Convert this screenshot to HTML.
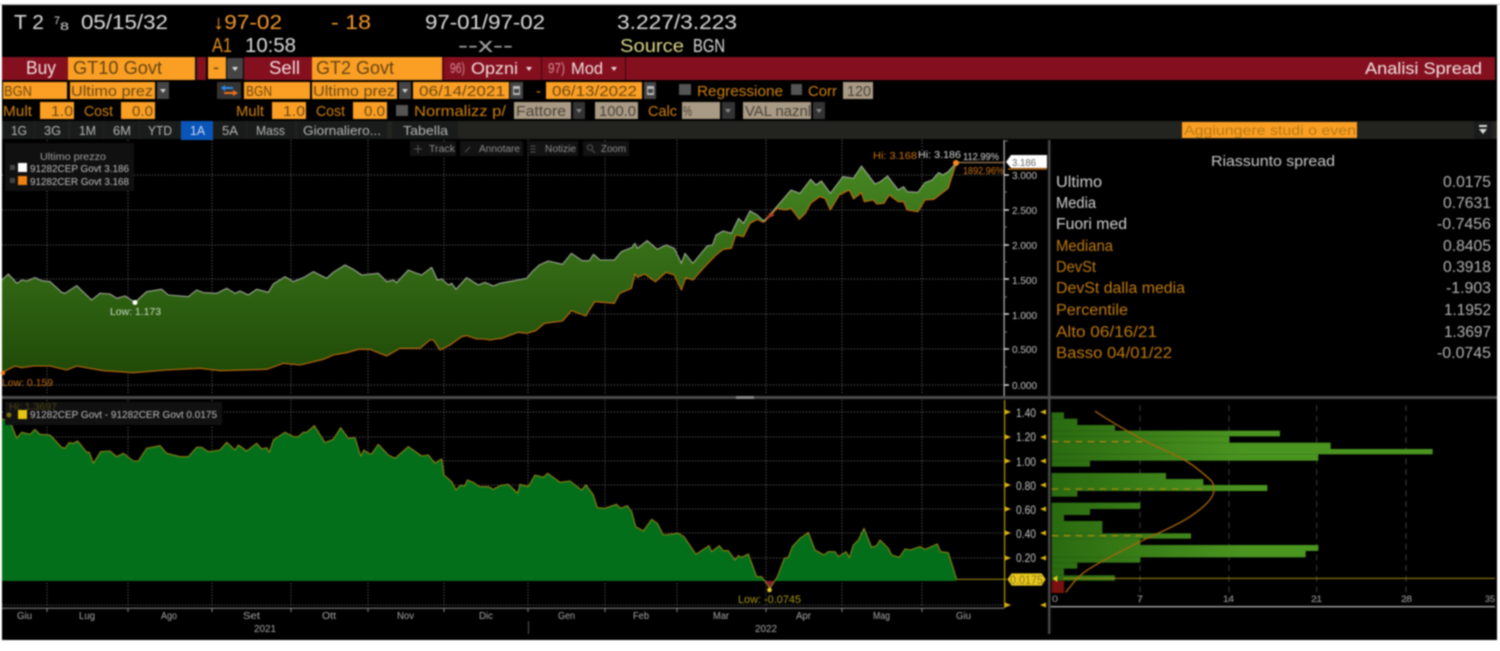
<!DOCTYPE html>
<html><head><meta charset="utf-8"><title>Analisi Spread</title>
<style>
html,body{margin:0;padding:0;background:#fff;width:1500px;height:651px;overflow:hidden}
svg{display:block;filter:blur(.7px)}
text{font-family:"Liberation Sans",sans-serif;white-space:pre}
.s{vector-effect:non-scaling-stroke;stroke-linejoin:round}
</style></head><body>
<svg xmlns="http://www.w3.org/2000/svg" width="1500" height="651" viewBox="0 0 1500 651">
<defs>
<linearGradient id="gl" gradientUnits="userSpaceOnUse" x1="0" y1="-195" x2="0" y2="450"><stop offset="0" stop-color="#468622"/><stop offset="1" stop-color="#1e4806"/></linearGradient>
<linearGradient id="gr" gradientUnits="userSpaceOnUse" x1="0" y1="15" x2="0" y2="660"><stop offset="0" stop-color="#468622"/><stop offset="1" stop-color="#1e4806"/></linearGradient>
<linearGradient id="gb" gradientUnits="userSpaceOnUse" x1="155" y1="0" x2="1300" y2="0"><stop offset="0" stop-color="#2a6a10"/><stop offset=".5" stop-color="#4a9420"/><stop offset="1" stop-color="#4a9420"/></linearGradient>
</defs>
<rect x="0" y="4" width="1500" height="1" fill="#bbb"/>
<rect x="2" y="5" width="1495" height="635" fill="#000"/>

<!-- header -->
<g font-size="20" fill="#dcdcdc">
<text x="14" y="29" textLength="30" lengthAdjust="spacingAndGlyphs">T 2</text>
<text x="54" y="24" font-size="11" textLength="6" lengthAdjust="spacingAndGlyphs">7</text>
<text x="60" y="30" font-size="11" textLength="9" lengthAdjust="spacingAndGlyphs">8</text>
<text x="81" y="29" textLength="87" lengthAdjust="spacingAndGlyphs">05/15/32</text>
<text x="425" y="29" textLength="120" lengthAdjust="spacingAndGlyphs">97-01/97-02</text>
<text x="617" y="29" textLength="120" lengthAdjust="spacingAndGlyphs">3.227/3.223</text>
<text x="245" y="52" textLength="51" lengthAdjust="spacingAndGlyphs">10:58</text>
<text x="458" y="52" textLength="55" fill="#a8a8a8" lengthAdjust="spacingAndGlyphs">--x--</text>
<text x="693" y="52" textLength="32" font-size="18" lengthAdjust="spacingAndGlyphs">BGN</text>
</g>
<g font-size="20" fill="#f2982a">
<text x="213" y="29" textLength="69" lengthAdjust="spacingAndGlyphs">↓97-02</text>
<text x="331" y="29" textLength="40" lengthAdjust="spacingAndGlyphs">- 18</text>
<text x="212" y="52" textLength="20" fill="#dd8c1e" lengthAdjust="spacingAndGlyphs">A1</text>
</g>
<text x="620" y="52" font-size="18" fill="#d9d488" textLength="64" lengthAdjust="spacingAndGlyphs">Source</text>

<!-- red bar -->
<rect x="2" y="57" width="1493" height="23" fill="#84101f"/>
<rect x="195" y="57" width="2" height="23" fill="#111"/>
<rect x="206" y="57" width="38" height="23" fill="#000"/>
<rect x="208" y="57" width="18" height="22" fill="#fb9f24"/>
<rect x="227" y="58" width="16" height="21" fill="#444"/>
<polygon points="232,67 238,67 235,71" fill="#ddd"/>
<rect x="68" y="57" width="127" height="23" fill="#fb9f24"/>
<rect x="312" y="57" width="130" height="23" fill="#fb9f24"/>
<rect x="443" y="57" width="1" height="23" fill="#3c060c"/>
<rect x="541" y="57" width="1" height="23" fill="#3c060c"/>
<rect x="625" y="57" width="1" height="23" fill="#3c060c"/>
<g font-size="18">
<text x="26" y="74" fill="#f2dcdc" textLength="30" lengthAdjust="spacingAndGlyphs">Buy</text>
<text x="73" y="74" fill="#644310" textLength="89" lengthAdjust="spacingAndGlyphs">GT10 Govt</text>
<text x="213" y="73" fill="#644310">-</text>
<text x="269" y="74" fill="#f2dcdc" textLength="31" lengthAdjust="spacingAndGlyphs">Sell</text>
<text x="316" y="74" fill="#644310" textLength="78" lengthAdjust="spacingAndGlyphs">GT2 Govt</text>
<text x="471" y="74" fill="#f2dcdc" font-size="17" textLength="47" lengthAdjust="spacingAndGlyphs">Opzni</text>
<text x="571" y="74" fill="#f2dcdc" font-size="17" textLength="32" lengthAdjust="spacingAndGlyphs">Mod</text>
<text x="1365" y="74" fill="#f2e4e4" font-size="17" textLength="117" lengthAdjust="spacingAndGlyphs">Analisi Spread</text>
</g>
<g font-size="15" fill="#d58c96">
<text x="450" y="73" textLength="15" lengthAdjust="spacingAndGlyphs">96)</text>
<text x="548" y="73" textLength="17" lengthAdjust="spacingAndGlyphs">97)</text>
</g>
<polygon points="526,67 532,67 529,71" fill="#e8d8d8"/>
<polygon points="611,67 617,67 614,71" fill="#e8d8d8"/>

<!-- row 2 -->
<g fill="#fb9f24">
<rect x="3" y="82" width="64" height="17"/>
<rect x="70" y="82" width="85" height="17"/>
<rect x="244" y="82" width="66" height="17"/>
<rect x="312" y="82" width="85" height="17"/>
<rect x="413" y="82" width="96" height="17"/>
<rect x="546" y="82" width="96" height="17"/>
<rect x="40" y="102" width="34" height="17"/>
<rect x="121" y="102" width="34" height="17"/>
<rect x="272" y="102" width="34" height="17"/>
<rect x="353" y="102" width="34" height="17"/>
</g>
<g fill="#444">
<rect x="157" y="82" width="12" height="17"/>
<rect x="399" y="82" width="12" height="17"/>
<rect x="510" y="82" width="13" height="17"/>
<rect x="644" y="82" width="12" height="17"/>
<rect x="217" y="82" width="24" height="17" fill="#333"/>
<rect x="573" y="102" width="12" height="17" fill="#333"/>
<rect x="722" y="102" width="13" height="17" fill="#333"/>
<rect x="813" y="102" width="12" height="17" fill="#333"/>
</g>
<g fill="#ccc">
<polygon points="160,89 166,89 163,93"/>
<polygon points="402,89 408,89 405,93"/>
<polygon points="576,109 582,109 579,113" fill="#888"/>
<polygon points="725,109 731,109 728,113" fill="#888"/>
<polygon points="816,109 822,109 819,113" fill="#888"/>
<rect x="513" y="86" width="7" height="9" fill="#bbb"/>
<rect x="647" y="86" width="7" height="9" fill="#bbb"/>
<rect x="514" y="89" width="5" height="4" fill="#444"/>
<rect x="648" y="89" width="5" height="4" fill="#444"/>
</g>
<path d="M222 88h11" stroke="#2a8cf0" stroke-width="2" fill="none"/>
<polygon points="225,85 225,91 221,88" fill="#2a8cf0"/>
<path d="M224 93h10" stroke="#f0701e" stroke-width="2" fill="none"/>
<polygon points="233,90 233,96 238,93" fill="#f0701e"/>
<g fill="#545454">
<rect x="679" y="84" width="12" height="11"/>
<rect x="791" y="84" width="11" height="11"/>
<rect x="396" y="105" width="12" height="11"/>
</g>
<g fill="#a89a85">
<rect x="843" y="82" width="30" height="17"/>
<rect x="514" y="102" width="57" height="17"/>
<rect x="595" y="102" width="43" height="17"/>
<rect x="682" y="102" width="38" height="17"/>
<rect x="743" y="102" width="68" height="17"/>
</g>
<g font-size="15" fill="#6e4a12">
<text x="4" y="96" textLength="28" lengthAdjust="spacingAndGlyphs">BGN</text>
<text x="71" y="96" textLength="82" lengthAdjust="spacingAndGlyphs">Ultimo prez</text>
<text x="246" y="96" textLength="26" lengthAdjust="spacingAndGlyphs">BGN</text>
<text x="313" y="96" textLength="82" lengthAdjust="spacingAndGlyphs">Ultimo prez</text>
<text x="419" y="96" textLength="86" lengthAdjust="spacingAndGlyphs">06/14/2021</text>
<text x="552" y="96" textLength="85" lengthAdjust="spacingAndGlyphs">06/13/2022</text>
<text x="51" y="116" textLength="22" lengthAdjust="spacingAndGlyphs">1.0</text>
<text x="132" y="116" textLength="21" lengthAdjust="spacingAndGlyphs">0.0</text>
<text x="283" y="116" textLength="22" lengthAdjust="spacingAndGlyphs">1.0</text>
<text x="364" y="116" textLength="21" lengthAdjust="spacingAndGlyphs">0.0</text>
</g>
<g font-size="15" fill="#4c4438">
<text x="847" y="96" textLength="24" lengthAdjust="spacingAndGlyphs">120</text>
<text x="516" y="116" textLength="50" lengthAdjust="spacingAndGlyphs">Fattore</text>
<text x="599" y="116" textLength="37" lengthAdjust="spacingAndGlyphs">100.0</text>
<text x="683" y="116" textLength="9" lengthAdjust="spacingAndGlyphs">%</text>
<text x="745" y="116" textLength="66" lengthAdjust="spacingAndGlyphs">VAL naznl</text>
</g>
<g font-size="15" fill="#d0810f">
<text x="697" y="96" textLength="86" lengthAdjust="spacingAndGlyphs">Regressione</text>
<text x="808" y="96" textLength="29" lengthAdjust="spacingAndGlyphs">Corr</text>
<text x="3" y="116" textLength="29" lengthAdjust="spacingAndGlyphs">Mult</text>
<text x="84" y="116" textLength="29" lengthAdjust="spacingAndGlyphs">Cost</text>
<text x="236" y="116" textLength="28" lengthAdjust="spacingAndGlyphs">Mult</text>
<text x="316" y="116" textLength="29" lengthAdjust="spacingAndGlyphs">Cost</text>
<text x="414" y="116" textLength="92" lengthAdjust="spacingAndGlyphs">Normalizz p/</text>
<text x="648" y="116" textLength="29" lengthAdjust="spacingAndGlyphs">Calc</text>
</g>
<text x="536" y="96" font-size="15" fill="#d0810f">-</text>

<!-- tab row -->
<rect x="2" y="121" width="1495" height="18" fill="#23231f"/>
<g fill="#1a1c1c">
<rect x="3" y="121" width="31" height="18"/><rect x="35" y="121" width="33" height="18"/>
<rect x="70" y="121" width="33" height="18"/><rect x="104" y="121" width="35" height="18"/>
<rect x="140" y="121" width="40" height="18"/>
<rect x="213" y="121" width="33" height="18"/><rect x="247" y="121" width="48" height="18"/>
<rect x="297" y="121" width="90" height="18"/><rect x="392" y="121" width="66" height="18"/>
<rect x="1474" y="121" width="18" height="18"/>
</g>
<rect x="181" y="121" width="32" height="19" fill="#0a55b8"/>
<g font-size="13" fill="#b6b6b6">
<text x="11" y="135" textLength="16" lengthAdjust="spacingAndGlyphs">1G</text>
<text x="44" y="135" textLength="17" lengthAdjust="spacingAndGlyphs">3G</text>
<text x="79" y="135" textLength="17" lengthAdjust="spacingAndGlyphs">1M</text>
<text x="113" y="135" textLength="18" lengthAdjust="spacingAndGlyphs">6M</text>
<text x="148" y="135" textLength="24" lengthAdjust="spacingAndGlyphs">YTD</text>
<text x="190" y="135" textLength="15" fill="#c8d8f0" lengthAdjust="spacingAndGlyphs">1A</text>
<text x="222" y="135" textLength="16" lengthAdjust="spacingAndGlyphs">5A</text>
<text x="256" y="135" textLength="29" lengthAdjust="spacingAndGlyphs">Mass</text>
<text x="303" y="135" textLength="78" lengthAdjust="spacingAndGlyphs">Giornaliero...</text>
<text x="403" y="135" textLength="45" lengthAdjust="spacingAndGlyphs">Tabella</text>
</g>
<rect x="1182" y="122" width="175" height="16" fill="#fb9f24"/>
<text x="1184" y="135" font-size="14" fill="#b87a12" textLength="172" lengthAdjust="spacingAndGlyphs">Aggiungere studi o even</text>
<rect x="1479" y="125" width="8" height="2" fill="#ddd"/>
<polygon points="1479,129 1487,129 1483,134" fill="#ddd"/>

<!-- grids -->
<g stroke="#6a6a6a" stroke-width="1" stroke-dasharray="1 2" fill="none">
<path d="M47 140V395M128 140V395M212 140V395M291 140V395M368 140V395M444 140V395M528 140V395M605 140V395M677 140V395M766 140V395M842 140V395M922 140V395"/>
<path d="M47 400V607M128 400V607M212 400V607M291 400V607M368 400V607M444 400V607M528 400V607M605 400V607M677 400V607M766 400V607M842 400V607M922 400V607"/>
<path d="M2 175H1004M2 210H1004M2 245H1004M2 279H1004M2 314H1004M2 349H1004M2 385H1004"/>
<path d="M2 412H1004M2 437H1004M2 461H1004M2 485H1004M2 509H1004M2 533H1004M2 558H1004M2 605H1004"/>
</g>

<!-- upper chart left part -->
<g transform="translate(0,230) scale(.33333,.33333)">
<polygon fill="url(#gl)" points="6,150 25,132 51,160 66,150 80,153 105,143 125,152 150,155 185,187 195,190 230,167 275,210 300,190 330,192 350,205 375,198 405,217 440,185 485,178 505,195 565,200 590,180 610,188 650,190 680,175 705,190 720,183 745,195 770,178 805,187 820,162 855,140 880,155 910,143 940,125 980,145 1000,127 1035,105 1060,118 1085,135 1135,130 1160,155 1180,150 1190,158 1225,120 1250,130 1265,135 1295,112 1312,150 1325,147 1345,165 1355,160 1368,178 1400,143 1435,165 1455,157 1480,168 1500,160 1500,325 1470,330 1450,327 1430,327 1400,317 1385,320 1350,345 1320,360 1300,330 1290,330 1260,355 1200,355 1160,378 1110,358 1075,358 1040,368 1000,375 970,388 900,405 850,400 800,418 660,422 600,415 500,420 400,428 310,422 230,408 200,420 150,408 100,408 65,413 45,408 6,428"/>
<polyline class="s" fill="none" stroke="#a0aa98" stroke-width="1.1" points="6,150 25,132 51,160 66,150 80,153 105,143 125,152 150,155 185,187 195,190 230,167 275,210 300,190 330,192 350,205 375,198 405,217 440,185 485,178 505,195 565,200 590,180 610,188 650,190 680,175 705,190 720,183 745,195 770,178 805,187 820,162 855,140 880,155 910,143 940,125 980,145 1000,127 1035,105 1060,118 1085,135 1135,130 1160,155 1180,150 1190,158 1225,120 1250,130 1265,135 1295,112 1312,150 1325,147 1345,165 1355,160 1368,178 1400,143 1435,165 1455,157 1480,168 1500,160"/>
<polyline class="s" fill="none" stroke="#c86c0e" stroke-width="1.1" points="1500,325 1470,330 1450,327 1430,327 1400,317 1385,320 1350,345 1320,360 1300,330 1290,330 1260,355 1200,355 1160,378 1110,358 1075,358 1040,368 1000,375 970,388 900,405 850,400 800,418 660,422 600,415 500,420 400,428 310,422 230,408 200,420 150,408 100,408 65,413 45,408 6,428"/>
</g>
<!-- upper chart right part -->
<g transform="translate(500,160) scale(.35714,.33333)">
<polygon fill="url(#gr)" points="0,370 25,365 50,360 75,355 90,335 110,315 135,303 175,313 200,280 230,302 250,302 262,283 280,300 320,300 340,275 370,262 378,250 385,265 412,242 440,268 465,255 488,265 508,310 518,280 540,310 580,258 595,255 605,225 625,213 648,220 668,175 682,190 700,153 720,165 738,183 755,165 775,140 815,90 840,100 870,58 885,75 900,63 925,100 960,50 990,55 1012,18 1050,72 1065,65 1085,48 1115,90 1130,80 1140,95 1170,97 1190,68 1210,60 1228,38 1240,45 1255,35 1278,8 1255,85 1215,118 1190,120 1170,155 1140,150 1130,125 1115,125 1090,105 1075,130 1055,132 1045,120 1020,125 1012,98 990,117 978,90 950,105 925,150 910,115 895,110 870,130 855,160 838,178 815,145 800,150 775,145 755,170 738,187 720,178 700,190 682,230 660,225 648,265 625,268 605,285 575,318 540,360 520,353 508,390 488,345 465,337 435,365 405,342 385,352 378,342 368,385 335,400 320,430 265,425 240,468 200,452 175,483 125,490 100,512 75,520 50,517 0,537"/>
<polyline class="s" fill="none" stroke="#a0aa98" stroke-width="1.1" points="0,370 25,365 50,360 75,355 90,335 110,315 135,303 175,313 200,280 230,302 250,302 262,283 280,300 320,300 340,275 370,262 378,250 385,265 412,242 440,268 465,255 488,265 508,310 518,280 540,310 580,258 595,255 605,225 625,213 648,220 668,175 682,190 700,153 720,165 738,183 755,165 775,140 815,90 840,100 870,58 885,75 900,63 925,100 960,50 990,55 1012,18 1050,72 1065,65 1085,48 1115,90 1130,80 1140,95 1170,97 1190,68 1210,60 1228,38 1240,45 1255,35 1278,8"/>
<polyline class="s" fill="none" stroke="#c86c0e" stroke-width="1.1" points="1278,8 1255,85 1215,118 1190,120 1170,155 1140,150 1130,125 1115,125 1090,105 1075,130 1055,132 1045,120 1020,125 1012,98 990,117 978,90 950,105 925,150 910,115 895,110 870,130 855,160 838,178 815,145 800,150 775,145 755,170 738,187 720,178 700,190 682,230 660,225 648,265 625,268 605,285 575,318 540,360 520,353 508,390 488,345 465,337 435,365 405,342 385,352 378,342 368,385 335,400 320,430 265,425 240,468 200,452 175,483 125,490 100,512 75,520 50,517 0,537"/>
<polygon points="745,178 755,158 770,165" fill="#b04020"/>
</g>
<circle cx="135" cy="302.5" r="2.5" fill="#fff"/>
<circle cx="3" cy="373" r="2.2" fill="#f07a10"/>
<path d="M958 162.5H1005" stroke="#8a6a48" stroke-width="1.5"/>
<circle cx="956" cy="163" r="3" fill="#f58a1c"/>
<path d="M1008 169H1047" stroke="#b8660c" stroke-width="1.5"/>

<!-- lower chart -->
<g transform="translate(0,395) scale(.33333)">
<polygon fill="#046f1b" points="6,72 30,78 50,130 65,112 90,118 105,103 120,118 150,120 185,157 195,160 207,143 220,145 233,138 260,172 268,172 280,205 302,170 330,168 350,185 370,175 400,198 415,198 440,160 480,152 500,175 540,185 565,185 590,157 605,157 625,170 660,165 680,142 705,165 715,150 740,168 770,145 785,162 800,158 808,172 820,135 855,112 880,125 895,125 910,112 920,112 943,92 975,143 1000,133 1022,98 1045,130 1065,128 1082,183 1092,165 1105,175 1115,177 1135,148 1165,180 1185,190 1225,155 1265,183 1285,180 1305,205 1325,192 1332,240 1355,260 1368,285 1380,272 1395,272 1402,255 1420,262 1438,275 1465,275 1480,283 1500,272 1500,558 6,558"/>
<polyline class="s" fill="none" stroke="#8f8412" stroke-width="1.1" points="6,72 30,78 50,130 65,112 90,118 105,103 120,118 150,120 185,157 195,160 207,143 220,145 233,138 260,172 268,172 280,205 302,170 330,168 350,185 370,175 400,198 415,198 440,160 480,152 500,175 540,185 565,185 590,157 605,157 625,170 660,165 680,142 705,165 715,150 740,168 770,145 785,162 800,158 808,172 820,135 855,112 880,125 895,125 910,112 920,112 943,92 975,143 1000,133 1022,98 1045,130 1065,128 1082,183 1092,165 1105,175 1115,177 1135,148 1165,180 1185,190 1225,155 1265,183 1285,180 1305,205 1325,192 1332,240 1355,260 1368,285 1380,272 1395,272 1402,255 1420,262 1438,275 1465,275 1480,283 1500,272"/>
</g>
<g transform="translate(500,395) scale(.33333)">
<polygon fill="#046f1b" points="0,272 25,268 53,295 60,268 85,275 105,240 130,247 143,235 180,262 210,258 245,285 258,270 280,300 292,338 315,340 350,328 362,340 382,332 395,350 407,395 430,408 455,373 472,385 490,420 535,415 552,425 588,478 627,452 635,470 658,452 670,467 685,467 705,495 715,482 725,487 745,477 770,545 785,545 797,558 822,558 832,545 853,490 865,487 877,455 900,430 925,413 945,465 972,480 985,470 1005,470 1015,485 1038,470 1048,488 1060,450 1075,435 1092,400 1115,457 1130,452 1140,435 1165,460 1175,480 1198,487 1215,462 1230,465 1260,455 1275,463 1312,447 1322,470 1345,473 1370,558 0,558"/>
<polygon fill="#8a1c30" points="797,558 822,558 810,580"/>
<polyline class="s" fill="none" stroke="#8f8412" stroke-width="1.1" points="0,272 25,268 53,295 60,268 85,275 105,240 130,247 143,235 180,262 210,258 245,285 258,270 280,300 292,338 315,340 350,328 362,340 382,332 395,350 407,395 430,408 455,373 472,385 490,420 535,415 552,425 588,478 627,452 635,470 658,452 670,467 685,467 705,495 715,482 725,487 745,477 770,545 785,545 810,580 832,545 853,490 865,487 877,455 900,430 925,413 945,465 972,480 985,470 1005,470 1015,485 1038,470 1048,488 1060,450 1075,435 1092,400 1115,457 1130,452 1140,435 1165,460 1175,480 1198,487 1215,462 1230,465 1260,455 1275,463 1312,447 1322,470 1345,473 1370,553 1520,553"/>
</g>
<circle cx="769.5" cy="590" r="2.3" fill="#e8c820"/>

<!-- dividers -->
<rect x="2" y="396" width="1495" height="3" fill="#4c4c4c"/>
<rect x="736" y="396" width="18" height="3" fill="#888"/>
<rect x="1048" y="140" width="2.5" height="494" fill="#484848"/>

<!-- upper axis -->
<rect x="1003.5" y="140" width="1.2" height="256" fill="#b8b8b8"/>
<path d="M1004 175h5M1004 210h5M1004 245h5M1004 279h5M1004 314h5M1004 349h5M1004 385h5" stroke="#ddd" stroke-width="1.4"/>
<path d="M1004 141h4M1004 192h3M1004 227h3M1004 262h3M1004 297h3M1004 332h3M1004 367h3" stroke="#777" stroke-width="1"/>
<g font-size="10.5" fill="#c4c4c4">
<text x="1012" y="179" textLength="25" lengthAdjust="spacingAndGlyphs">3.000</text>
<text x="1012" y="214" textLength="25" lengthAdjust="spacingAndGlyphs">2.500</text>
<text x="1012" y="249" textLength="25" lengthAdjust="spacingAndGlyphs">2.000</text>
<text x="1012" y="284" textLength="25" lengthAdjust="spacingAndGlyphs">1.500</text>
<text x="1012" y="319" textLength="25" lengthAdjust="spacingAndGlyphs">1.000</text>
<text x="1012" y="353" textLength="25" lengthAdjust="spacingAndGlyphs">0.500</text>
<text x="1012" y="389" textLength="25" lengthAdjust="spacingAndGlyphs">0.000</text>
</g>
<polygon points="1006,162 1011,155 1047,155 1047,168 1011,168" fill="#fff"/>
<text x="1012" y="166" font-size="10.5" fill="#666" textLength="24" lengthAdjust="spacingAndGlyphs">3.186</text>

<!-- upper labels -->
<g font-size="10">
<text x="873" y="159" fill="#cc7410" textLength="44" lengthAdjust="spacingAndGlyphs">Hi: 3.168</text>
<text x="918" y="158" fill="#d8d8d8" textLength="43" lengthAdjust="spacingAndGlyphs">Hi: 3.186</text>
<text x="963" y="160" fill="#d8d8d8" textLength="36" lengthAdjust="spacingAndGlyphs">112.99%</text>
<text x="963" y="174" fill="#cc7410" textLength="41" lengthAdjust="spacingAndGlyphs">1892.96%</text>
<text x="110" y="315" fill="#cfdcc8" textLength="51" lengthAdjust="spacingAndGlyphs">Low: 1.173</text>
<text x="2" y="386" fill="#c46a10" textLength="51" lengthAdjust="spacingAndGlyphs">Low: 0.159</text>
<text x="738" y="603" fill="#a89414" textLength="63" font-size="11" lengthAdjust="spacingAndGlyphs">Low: -0.0745</text>
</g>

<!-- toolbar -->
<g fill="#131313">
<rect x="410" y="141" width="46" height="15"/><rect x="460" y="141" width="63" height="15"/>
<rect x="529" y="141" width="49" height="15"/><rect x="583" y="141" width="46" height="15"/>
</g>
<g font-size="10" fill="#8e8e8e">
<text x="429" y="152" textLength="26" lengthAdjust="spacingAndGlyphs">Track</text>
<text x="479" y="152" textLength="41" lengthAdjust="spacingAndGlyphs">Annotare</text>
<text x="545" y="152" textLength="31" lengthAdjust="spacingAndGlyphs">Notizie</text>
<text x="601" y="152" textLength="25" lengthAdjust="spacingAndGlyphs">Zoom</text>
</g>
<path d="M414 149h8M418 145v8M465 152l5-5M530.5 146h5M530.5 149h5M530.5 152h5" stroke="#555" stroke-width="1"/>
<circle cx="590" cy="147.5" r="2.6" fill="none" stroke="#555"/><path d="M592 150l3 3" stroke="#555"/>

<!-- legends -->
<rect x="5" y="143" width="129" height="48" fill="#101010"/>
<text x="40" y="160" font-size="10" fill="#a0a0a0" textLength="66" lengthAdjust="spacingAndGlyphs">Ultimo prezzo</text>
<rect x="10" y="165" width="5" height="5" fill="#444"/><rect x="10" y="178" width="5" height="5" fill="#444"/>
<rect x="18" y="163" width="9" height="9" fill="#fff"/><rect x="18" y="176" width="9" height="9" fill="#f08012"/>
<g font-size="10.5" fill="#c0c0c0">
<text x="30" y="172" textLength="99" lengthAdjust="spacingAndGlyphs">91282CEP Govt 3.186</text>
<text x="30" y="185" textLength="99" lengthAdjust="spacingAndGlyphs">91282CER Govt 3.168</text>
</g>
<rect x="5" y="402" width="217" height="23" fill="#111"/>
<circle cx="9" cy="415" r="2.5" fill="#7a6c10"/>
<text x="9" y="410" font-size="10" fill="#4a4210" textLength="48" lengthAdjust="spacingAndGlyphs">Hi: 1.3697</text>
<rect x="18" y="410" width="9" height="9" fill="#e8c410"/>
<text x="30" y="418" font-size="10.5" fill="#c0c0c0" textLength="187" lengthAdjust="spacingAndGlyphs">91282CEP Govt - 91282CER Govt 0.0175</text>

<!-- lower axis -->
<rect x="2" y="607.5" width="1002" height="1.5" fill="#5e5e5e"/>
<path d="M47 608v4M128 608v4M212 608v4M291 608v4M368 608v4M444 608v4M528 608v4M605 608v4M677 608v4M766 608v4M842 608v4M922 608v4" stroke="#888"/>
<rect x="1004" y="400" width="1.2" height="208" fill="#b09a10"/>
<g fill="#d8b410">
<polygon points="1005,409.5 1011,412 1005,414.5"/><polygon points="1005,434.5 1011,437 1005,439.5"/>
<polygon points="1005,458.5 1011,461 1005,463.5"/><polygon points="1005,482.5 1011,485 1005,487.5"/>
<polygon points="1005,506.5 1011,509 1005,511.5"/><polygon points="1005,530.5 1011,533 1005,535.5"/>
<polygon points="1005,555.5 1011,558 1005,560.5"/><polygon points="1005,602.5 1011,605 1005,607.5"/>
<polygon points="1046,409.5 1040,412 1046,414.5"/><polygon points="1046,434.5 1040,437 1046,439.5"/>
<polygon points="1046,458.5 1040,461 1046,463.5"/><polygon points="1046,482.5 1040,485 1046,487.5"/>
<polygon points="1046,506.5 1040,509 1046,511.5"/><polygon points="1046,530.5 1040,533 1046,535.5"/>
<polygon points="1046,555.5 1040,558 1046,560.5"/><polygon points="1046,602.5 1040,605 1046,607.5"/>
</g>
<g font-size="11.5" fill="#c4c4c4">
<text x="1016" y="417" textLength="20" lengthAdjust="spacingAndGlyphs">1.40</text>
<text x="1016" y="441" textLength="20" lengthAdjust="spacingAndGlyphs">1.20</text>
<text x="1016" y="466" textLength="20" lengthAdjust="spacingAndGlyphs">1.00</text>
<text x="1016" y="490" textLength="20" lengthAdjust="spacingAndGlyphs">0.80</text>
<text x="1016" y="514" textLength="20" lengthAdjust="spacingAndGlyphs">0.60</text>
<text x="1016" y="538" textLength="20" lengthAdjust="spacingAndGlyphs">0.40</text>
<text x="1016" y="562" textLength="20" lengthAdjust="spacingAndGlyphs">0.20</text>
</g>

<!-- histogram -->
<g transform="translate(1000,395) scale(.33333)">
<g stroke="#3a3a3a" stroke-width="3" stroke-dasharray="18 14"><path d="M420 30V625M687 30V625M950 30V625M1218 30V625"/></g>
<g fill="url(#gb)">
<rect x="155" y="52" width="37" height="19"/><rect x="155" y="71" width="77" height="19"/>
<rect x="155" y="90" width="190" height="17"/><rect x="155" y="107" width="685" height="17"/>
<rect x="155" y="124" width="533" height="19"/><rect x="155" y="143" width="837" height="19"/>
<rect x="155" y="162" width="1143" height="16"/><rect x="155" y="178" width="800" height="19"/>
<rect x="155" y="197" width="115" height="18"/>
<rect x="155" y="234" width="343" height="18"/><rect x="155" y="252" width="455" height="18"/>
<rect x="155" y="270" width="647" height="18"/><rect x="155" y="288" width="77" height="17"/>
<rect x="155" y="323" width="266" height="19"/><rect x="155" y="342" width="115" height="18"/>
<rect x="155" y="360" width="37" height="18"/><rect x="155" y="378" width="152" height="37"/>
<rect x="155" y="415" width="418" height="16"/><rect x="155" y="431" width="266" height="19"/>
<rect x="155" y="450" width="800" height="18"/><rect x="155" y="468" width="762" height="19"/>
<rect x="155" y="487" width="266" height="16"/><rect x="155" y="503" width="77" height="18"/>
<rect x="155" y="521" width="37" height="20"/><rect x="155" y="541" width="190" height="16"/>
</g>
<rect x="155" y="558" width="37" height="36" fill="#7a1010"/>
<g stroke="#a88a10" stroke-width="4" stroke-dasharray="20 16" fill="none"><path d="M155 140H440M155 282H625M155 422H440"/></g>
<path d="M285 48C330 80 390 112 430 135S540 180 590 220S642 262 642 285S615 335 570 365S460 420 420 440S310 495 270 520S220 565 197 592" fill="none" stroke="#a86608" stroke-width="4"/>
<path d="M190 550H1485" stroke="#a88a10" stroke-width="3"/>
<path d="M152 635H1485" stroke="#a8a8a8" stroke-width="4"/>
<polygon points="158,551 172,541 172,561" fill="#e8c820"/>
<polygon points="22,553 35,535 125,535 137,553 125,572 35,572" fill="#e8c820"/>
</g>
<text x="1010" y="584" font-size="11.5" fill="#8e7c10" textLength="33" lengthAdjust="spacingAndGlyphs">0.0175</text>
<g font-size="9.5" fill="#a8a8a8">
<text x="1052" y="602" textLength="6" lengthAdjust="spacingAndGlyphs">0</text>
<text x="1137" y="602" textLength="6" lengthAdjust="spacingAndGlyphs">7</text>
<text x="1223" y="602" textLength="11" lengthAdjust="spacingAndGlyphs">14</text>
<text x="1311" y="602" textLength="11" lengthAdjust="spacingAndGlyphs">21</text>
<text x="1401" y="602" textLength="11" lengthAdjust="spacingAndGlyphs">28</text>
<text x="1485" y="602" textLength="10" lengthAdjust="spacingAndGlyphs">35</text>
</g>

<!-- months -->
<g font-size="10.5" fill="#a8a8a8">
<text x="17" y="619" textLength="15" lengthAdjust="spacingAndGlyphs">Giu</text>
<text x="79" y="619" textLength="16" lengthAdjust="spacingAndGlyphs">Lug</text>
<text x="161" y="619" textLength="16" lengthAdjust="spacingAndGlyphs">Ago</text>
<text x="243" y="619" textLength="17" lengthAdjust="spacingAndGlyphs">Set</text>
<text x="322" y="619" textLength="14" lengthAdjust="spacingAndGlyphs">Ott</text>
<text x="397" y="619" textLength="17" lengthAdjust="spacingAndGlyphs">Nov</text>
<text x="479" y="619" textLength="14" lengthAdjust="spacingAndGlyphs">Dic</text>
<text x="558" y="619" textLength="17" lengthAdjust="spacingAndGlyphs">Gen</text>
<text x="633" y="619" textLength="16" lengthAdjust="spacingAndGlyphs">Feb</text>
<text x="713" y="619" textLength="16" lengthAdjust="spacingAndGlyphs">Mar</text>
<text x="796" y="619" textLength="15" lengthAdjust="spacingAndGlyphs">Apr</text>
<text x="873" y="619" textLength="17" lengthAdjust="spacingAndGlyphs">Mag</text>
<text x="956" y="619" textLength="15" lengthAdjust="spacingAndGlyphs">Giu</text>
<text x="254" y="632" textLength="22" lengthAdjust="spacingAndGlyphs">2021</text>
<text x="755" y="632" textLength="22" lengthAdjust="spacingAndGlyphs">2022</text>
</g>
<rect x="528" y="621" width="1" height="13" fill="#555"/>

<!-- summary -->
<text x="1211" y="166" font-size="15" fill="#c8c8c8" textLength="124" lengthAdjust="spacingAndGlyphs">Riassunto spread</text>
<g font-size="15.5" fill="#cfcfcf">
<text x="1056" y="187" textLength="46" lengthAdjust="spacingAndGlyphs">Ultimo</text>
<text x="1056" y="208" textLength="40" lengthAdjust="spacingAndGlyphs">Media</text>
<text x="1056" y="229" textLength="71" lengthAdjust="spacingAndGlyphs">Fuori med</text>
</g>
<g font-size="15.5" fill="#c07a0e">
<text x="1056" y="251" textLength="57" lengthAdjust="spacingAndGlyphs">Mediana</text>
<text x="1056" y="272" textLength="40" lengthAdjust="spacingAndGlyphs">DevSt</text>
<text x="1056" y="293" textLength="129" lengthAdjust="spacingAndGlyphs">DevSt dalla media</text>
<text x="1056" y="315" textLength="72" lengthAdjust="spacingAndGlyphs">Percentile</text>
<text x="1056" y="337" textLength="101" lengthAdjust="spacingAndGlyphs">Alto 06/16/21</text>
<text x="1056" y="358" textLength="116" lengthAdjust="spacingAndGlyphs">Basso 04/01/22</text>
</g>
<g font-size="15.5" fill="#b4b4b4">
<text x="1443" y="187" textLength="48" lengthAdjust="spacingAndGlyphs">0.0175</text>
<text x="1443" y="208" textLength="48" lengthAdjust="spacingAndGlyphs">0.7631</text>
<text x="1437" y="229" textLength="54" lengthAdjust="spacingAndGlyphs">-0.7456</text>
<text x="1443" y="251" textLength="48" lengthAdjust="spacingAndGlyphs">0.8405</text>
<text x="1443" y="272" textLength="48" lengthAdjust="spacingAndGlyphs">0.3918</text>
<text x="1446" y="293" textLength="45" lengthAdjust="spacingAndGlyphs">-1.903</text>
<text x="1444" y="315" textLength="47" lengthAdjust="spacingAndGlyphs">1.1952</text>
<text x="1444" y="337" textLength="47" lengthAdjust="spacingAndGlyphs">1.3697</text>
<text x="1437" y="358" textLength="54" lengthAdjust="spacingAndGlyphs">-0.0745</text>
</g>
</svg>
</body></html>
